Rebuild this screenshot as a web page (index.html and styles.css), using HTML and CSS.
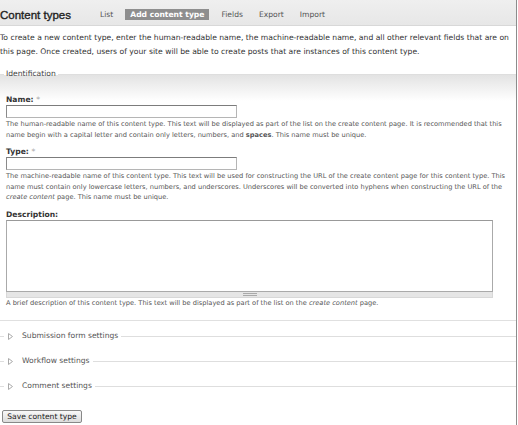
FILE: index.html
```html
<!DOCTYPE html>
<html>
<head>
<meta charset="utf-8">
<link rel="stylesheet" href="styles.css">
</head>
<body>
<div class="page">
  <div class="header">
    <h1 class="title">Content types</h1>
    <ul class="tabs">
      <li class="tab">List</li>
      <li class="tab active">Add content type</li>
      <li class="tab">Fields</li>
      <li class="tab">Export</li>
      <li class="tab">Import</li>
    </ul>
  </div>
  <p class="intro">To create a new content type, enter the human-readable name, the machine-readable name, and all other relevant fields that are on this page. Once created, users of your site will be able to create posts that are instances of this content type.</p>
  <form class="form">
    <fieldset class="fs open">
      <legend class="legend">Identification</legend>
      <div class="item first">
        <label class="label">Name: <span class="req">*</span></label>
        <input class="text" type="text">
        <div class="desc">The human-readable name of this content type. This text will be displayed as part of the list on the create content page. It is recommended that this name begin with a capital letter and contain only letters, numbers, and <strong>spaces</strong>. This name must be unique.</div>
      </div>
      <div class="item">
        <label class="label">Type: <span class="req">*</span></label>
        <input class="text" type="text">
        <div class="desc">The machine-readable name of this content type. This text will be used for constructing the URL of the create content page for this content type. This name must contain only lowercase letters, numbers, and underscores. Underscores will be converted into hyphens when constructing the URL of the <em>create content</em> page. This name must be unique.</div>
      </div>
      <div class="item">
        <label class="label">Description:</label>
        <div class="ta-wrap">
          <textarea class="ta"></textarea>
          <div class="grippie"><span class="grip"></span></div>
        </div>
        <div class="desc tight">A brief description of this content type. This text will be displayed as part of the list on the <em>create content</em> page.</div>
      </div>
    </fieldset>
    <fieldset class="fs collapsed">
      <legend class="legend"><svg class="arrow" width="5" height="7" viewBox="0 0 5 7"><polygon points="0.5,0.5 4.5,3.5 0.5,6.5" fill="#fff" stroke="#aaa" stroke-width="1"/></svg>Submission form settings</legend>
    </fieldset>
    <fieldset class="fs collapsed">
      <legend class="legend"><svg class="arrow" width="5" height="7" viewBox="0 0 5 7"><polygon points="0.5,0.5 4.5,3.5 0.5,6.5" fill="#fff" stroke="#aaa" stroke-width="1"/></svg>Workflow settings</legend>
    </fieldset>
    <fieldset class="fs collapsed">
      <legend class="legend"><svg class="arrow" width="5" height="7" viewBox="0 0 5 7"><polygon points="0.5,0.5 4.5,3.5 0.5,6.5" fill="#fff" stroke="#aaa" stroke-width="1"/></svg>Comment settings</legend>
    </fieldset>
    <button class="btn" type="button">Save content type</button>
  </form>
</div>
</body>
</html>
```
FILE: styles.css
```css
html, body {
  margin: 0;
  padding: 0;
  background: #fff;
}
body {
  font-family: "DejaVu Sans", Verdana, sans-serif;
  color: #333;
}
.page {
  width: 516px;
  height: 425px;
  border-right: 1px solid #8c8c8c;
  overflow: hidden;
  box-sizing: content-box;
}
.header {
  height: 21px;
  padding-top: 4px;
  border-bottom: 1px solid #d8d8d8;
  background: linear-gradient(#efefef, #e7e7e7);
  display: flex;
  align-items: center;
}
.title {
  margin: 0;
  font-family: "Liberation Sans", Arial, sans-serif;
  font-size: 11.5px;
  font-weight: normal;
  -webkit-text-stroke: 0.35px #222;
  color: #222;
  width: 100px;
}
.tabs {
  list-style: none;
  margin: 0;
  padding: 0;
  display: flex;
  align-items: center;
  gap: 16px;
}
.tab {
  font-size: 7.6px;
  color: #555;
  line-height: 11px;
}
.tab.active {
  background: #8e8e8e;
  color: #fff;
  font-weight: bold;
  padding: 0 5px;
  margin: 0 -4px;
}
.intro {
  margin: 5px 0 0 0;
  font-size: 7.65px;
  line-height: 14px;
  color: #333;
}
.form {
  margin: 0;
}
.fs {
  margin: 10px 0 0 -6px;
  padding: 0 6px 0 12px;
  border: none;
  border-top: 1px solid #dedede;
  min-width: 0;
}
.fs.open {
  background: linear-gradient(#e3e3e3, #fff 26px);
  border-bottom: 1px solid #e0e0e0;
  padding-bottom: 12px;
}
.legend {
  font-size: 7.6px;
  color: #444;
  padding: 0 2px;
  margin-left: -2px;
  line-height: 10px;
}
.item {
  margin-top: 7px;
}
.item.first {
  margin-top: 16px;
}
.label {
  display: block;
  font-size: 7.6px;
  font-weight: bold;
  color: #333;
  line-height: 10px;
  margin-bottom: 0;
}
.req {
  color: #aaa;
  font-weight: normal;
}
.text {
  display: block;
  width: 231px;
  height: 13px;
  box-sizing: border-box;
  border: 1px solid #8a8a8a;
  border-color: #7c7c7c #b5b5b5 #b5b5b5 #8a8a8a;
  padding: 0;
  margin: 0;
}
.desc {
  font-size: 6.65px;
  line-height: 10.5px;
  color: #555;
  margin-top: 1px;
  margin-right: -6px;
}
.desc.tight {
  margin-top: 0;
}
.ta-wrap {
  width: 487px;
}
.ta {
  display: block;
  width: 487px;
  height: 72px;
  box-sizing: border-box;
  border: 1px solid #aaa;
  border-top-color: #999;
  resize: none;
  margin: 0;
  padding: 0;
}
.grippie {
  height: 5px;
  background: #e6e6e6;
  border: 1px solid #d8d8d8;
  border-top: none;
  display: flex;
  justify-content: center;
  align-items: center;
}
.grip {
  width: 14px;
  height: 3px;
  border-top: 1px solid #aaa;
  border-bottom: 1px solid #aaa;
  box-sizing: border-box;
}
.fs.collapsed {
  margin-top: 10px;
  padding-bottom: 0;
  height: 0;
}
.fs.collapsed + .fs.collapsed {
  margin-top: 15px;
}
.fs.collapsed .legend {
  display: flex;
  align-items: center;
  padding-right: 3px;
  color: #555;
}
.arrow {
  display: block;
  margin-left: 2px;
  margin-right: 9px;
}
.btn {
  display: block;
  margin: 19px 0 0 2px;
  font-family: "DejaVu Sans", Verdana, sans-serif;
  font-size: 7.6px;
  color: #222;
  height: 13px;
  width: 80px;
  padding: 0;
  background: linear-gradient(#f8f8f8, #dcdcdc);
  border: 1px solid #888;
  border-radius: 2px;
  line-height: 11px;
}
```
